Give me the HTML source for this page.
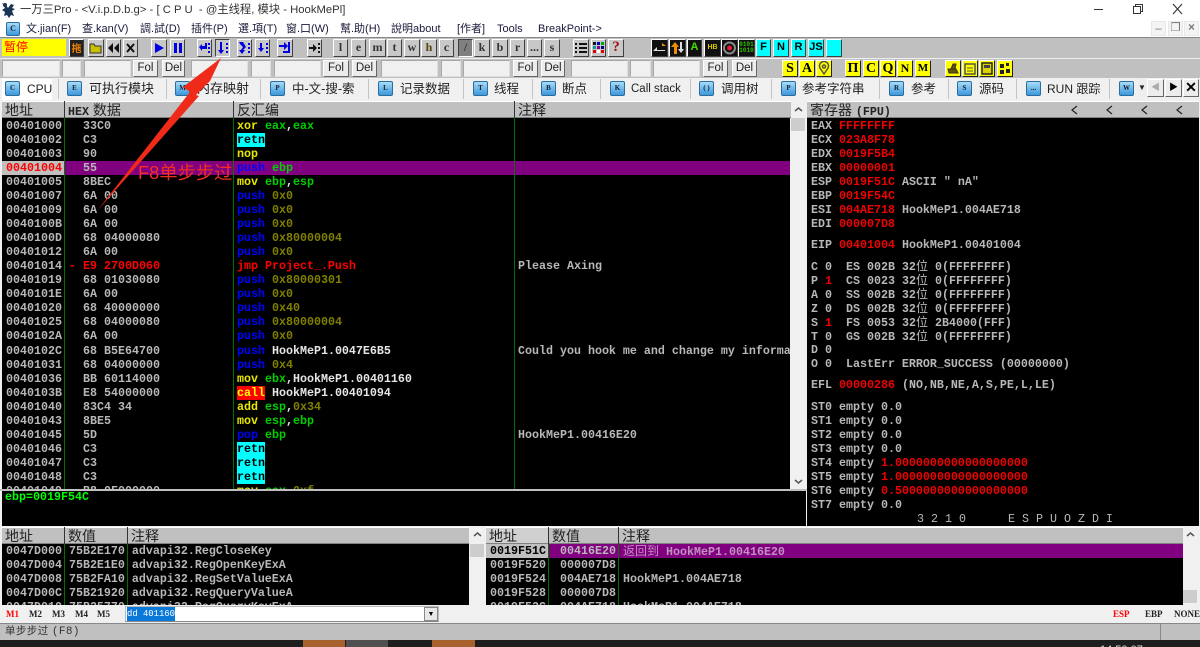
<!DOCTYPE html>
<html><head><meta charset="utf-8"><style>
html,body{margin:0;padding:0;width:1200px;height:647px;overflow:hidden;background:#fff}
body{position:relative;font-family:"Liberation Sans","Noto Sans CJK SC",sans-serif}
div,span,svg{box-sizing:border-box}
.p{position:absolute}
.t{position:absolute;white-space:pre;line-height:14px;height:14px;font:bold 11.67px/14px "Liberation Mono","Noto Sans CJK SC",monospace;color:#b8b8b8}
.m{position:absolute;top:22px;font-size:11px;line-height:15px;color:#1a1a3a;white-space:pre}
.b{position:absolute;top:39px;height:18px;background:#c8c8c8;border:1px solid;border-color:#fff #404040 #404040 #fff;text-align:center;font:bold 12px/15px "Liberation Serif",serif;color:#333;overflow:hidden}
.b svg{position:absolute;left:0;top:0}
.k{background:#111;color:#ee0}
.c{background:#0ff;color:#000;font:bold 11px/15px "Liberation Sans",sans-serif}
.y{position:absolute;top:60px;height:17px;background:#ff0;border:1px solid;border-color:#fff #222 #222 #fff;text-align:center;color:#000;font:bold 14px/15px "Liberation Serif",serif;overflow:hidden}
.i{position:absolute;top:60px;height:17px;background:#f0f0f0;border:1px solid;border-color:#a8a8a8 #ddd #ddd #a8a8a8}
.f{position:absolute;top:60px;height:17px;background:#ececec;border:1px solid;border-color:#fff #666 #666 #fff;text-align:center;font-size:11.5px;line-height:15px;color:#222}
.s{position:absolute;top:79px;width:1px;height:20px;background:#c4c4c4}
.o{position:absolute;top:81px;width:15px;height:15px;border:1px solid #2a6c9c;border-radius:2px;background:linear-gradient(#a8dcf8,#3c98dc);text-align:center;font:bold 7px/13px "Liberation Serif",serif;color:#123}
.l{position:absolute;top:81px;font-size:12px;line-height:16px;color:#222;white-space:pre}
.h{position:absolute;background:#c0c0c0;border-top:1px solid #fff;border-bottom:1px solid #808080;color:#222;font-size:14px;line-height:16px;padding-left:3px;white-space:pre}
.g{position:absolute;width:1px;background:#007000}
.a{left:6px}.x{left:83px}.d{left:237px}.n{left:518px}
i{font-style:normal}
.Y{color:#e8e800}.G{color:#00d000}.B{color:#0000ff}.O{color:#808000}.W{color:#e6e6e6}.R{color:#f00000}
.C{background:#0ff;color:#000;padding:0 0;display:inline-block;height:14px}
.F{background:#f00;color:#ff0;display:inline-block;height:14px}
.v{font:400 12px/14px "Noto Sans CJK SC",sans-serif}
</style></head><body>

<!-- title bar -->
<svg class="p" style="left:1px;top:2px" width="16" height="16" viewBox="0 0 16 16"><path d="M1 1l4 2 2 3 3-4 3 1-2 3 3 1-3 2 2 5-3-1-2 3-2-3-3 1 1-4-3-2 3-2z" fill="#1c3454"/><circle cx="4" cy="3" r="2" fill="#1c3454"/></svg>
<div class="p" style="left:20px;top:2px;font-size:11.3px;line-height:17px;color:#333;white-space:pre">一万三Pro - &lt;V.i.p.D.b.g&gt; - [ C P U  - @主线程, 模块 - HookMePl]</div>
<svg class="p" style="left:1090px;top:3px" width="105" height="14" viewBox="0 0 105 14" fill="none" stroke="#333"><path d="M4 6.5h9"/><path d="M43.5 3.5h7v7h-7zM45.5 3.5v-2h7v7h-2" fill="#fff"/><path d="M83 1l9 10M92 1l-9 10" stroke-width="1.1"/></svg>

<!-- menu -->
<div class="o" style="left:6px;top:22px;width:14px;height:14px;line-height:12px;font-size:8px">C</div>
<div class="m" style="left:26px">文.jian(F)</div>
<div class="m" style="left:82px">查.kan(V)</div>
<div class="m" style="left:140px">調.試(D)</div>
<div class="m" style="left:191px">插件(P)</div>
<div class="m" style="left:238px">選.項(T)</div>
<div class="m" style="left:286px">窗.口(W)</div>
<div class="m" style="left:340px">幫.助(H)</div>
<div class="m" style="left:391px">說明about</div>
<div class="m" style="left:457px">[作者]</div>
<div class="m" style="left:497px">Tools</div>
<div class="m" style="left:538px">BreakPoint-&gt;</div>
<div class="f" style="left:1151px;top:21px;width:15px;height:15px;background:#f4f4f4;border:1px solid #e8e8e8;color:#777;line-height:14px">–</div>
<div class="f" style="left:1168px;top:21px;width:15px;height:15px;background:#f4f4f4;border:1px solid #e8e8e8;color:#777;line-height:12px">❐</div>
<div class="f" style="left:1184px;top:21px;width:15px;height:15px;background:#f4f4f4;border:1px solid #e8e8e8;color:#777;line-height:13px;font-weight:bold">×</div>

<!-- toolbar 1 -->
<div class="p" style="left:0;top:37px;width:1200px;height:22px;background:#c0c0c0;border-top:1px solid #888;border-bottom:1px solid #f0f0f0"></div>
<div class="p" style="left:2px;top:39px;width:64px;height:17px;background:#ff0;color:#f00;font-size:12px;line-height:16px;padding-left:2px">暂停</div>
<div class="b k" style="left:69px;width:15px;background:#222;color:#f08000;font:bold 10px/15px 'Noto Sans CJK SC',sans-serif">拖</div>
<div class="b" style="left:88px;width:16px"><svg width="14" height="16"><path d="M1 4h4l1 2h6v7H1z" fill="#c8c000" stroke="#333"/></svg></div>
<div class="b" style="left:106px;width:15px"><svg width="13" height="16" fill="#111"><path d="M6 3v10L1 8zM12 3v10L7 8z"/></svg></div>
<div class="b" style="left:123px;width:15px"><svg width="13" height="16" stroke="#111" stroke-width="2"><path d="M3 4l7 8M10 4l-7 8"/></svg></div>
<div class="b" style="left:151px;width:16px"><svg width="14" height="16" fill="#0000e0"><path d="M3 3l9 5-9 5z"/></svg></div>
<div class="b" style="left:170px;width:15px"><svg width="13" height="16" fill="#0000e0"><path d="M3 3h3v10H3zM8 3h3v10H8z"/></svg></div>
<div class="b" style="left:197px;width:15px"><svg width="13" height="16" fill="#0000e0"><path d="M1 7l3-3v2h3V3h2v6H4v2zM10 3h2v2h-2zM10 7h2v2h-2zM10 11h2v2h-2z"/></svg></div>
<div class="b" style="left:215px;width:15px;border-color:#404040 #fff #fff #404040"><svg width="13" height="16" fill="#0000e0"><path d="M4 2h2v8h2l-3 4-3-4h2zM10 3h2v2h-2zM10 7h2v2h-2zM10 11h2v2h-2z"/></svg></div>
<div class="b" style="left:237px;width:15px"><svg width="13" height="16" fill="#0000e0"><path d="M1 2h4l3 5-3 3h2l-3 4-3-4h2l2-3-3-3zM10 3h2v2h-2zM10 7h2v2h-2zM10 11h2v2h-2z"/></svg></div>
<div class="b" style="left:255px;width:15px"><svg width="13" height="16" fill="#0000e0"><path d="M4 3h2v5h2l-3 4-3-4h2zM10 3h2v2h-2zM10 7h2v2h-2zM10 11h2v2h-2z"/></svg></div>
<div class="b" style="left:277px;width:16px"><svg width="14" height="16" fill="#0000e0"><path d="M1 5h5V2l4 4-4 4V7H1zM10 2h2v11H5v-2h5z"/></svg></div>
<div class="b" style="left:307px;width:15px"><svg width="13" height="16" fill="#111"><path d="M1 7h4V4l4 4-4 4V9H1zM10 3h2v2h-2zM10 7h2v2h-2zM10 11h2v2h-2z"/></svg></div>
<div class="b" style="left:333px;width:15px">l</div>
<div class="b" style="left:351px;width:15px">e</div>
<div class="b" style="left:369px;width:17px">m</div>
<div class="b" style="left:387px;width:15px">t</div>
<div class="b" style="left:404px;width:16px">w</div>
<div class="b" style="left:421px;width:16px;color:#554410">h</div>
<div class="b" style="left:439px;width:15px">c</div>
<div class="b" style="left:458px;width:15px;background:#808080;border-color:#404040 #fff #fff #404040">/</div>
<div class="b" style="left:474px;width:16px">k</div>
<div class="b" style="left:492px;width:16px">b</div>
<div class="b" style="left:510px;width:15px">r</div>
<div class="b" style="left:527px;width:15px">...</div>
<div class="b" style="left:544px;width:16px">s</div>
<div class="b" style="left:573px;width:16px"><svg width="14" height="16" fill="#111"><path d="M1 3h2v2H1zM5 3h8v2H5zM1 7h2v2H1zM5 7h8v2H5zM1 11h2v2H1zM5 11h8v2H5z"/></svg></div>
<div class="b" style="left:591px;width:15px"><svg width="13" height="16"><path d="M1 2h3v3H1z" fill="#111"/><path d="M5 2h3v3H5z" fill="#00c"/><path d="M9 2h3v3H9z" fill="#0a0"/><path d="M1 6h3v3H1z" fill="#00a0a0"/><path d="M5 6h3v3H5z" fill="#808"/><path d="M9 6h3v3H9z" fill="#000080"/><path d="M1 10h3v3H1z" fill="#d00"/><path d="M5 10h3v3H5z" fill="#fff"/><path d="M9 10h3v3H9z" fill="#d00"/></svg></div>
<div class="b" style="left:608px;width:16px;color:#a01010;font-size:15px">?</div>
<div class="b k" style="left:651px;width:17px"><svg width="15" height="16"><path d="M2 6h8V3l4 3H2z" fill="#f09000"/><path d="M13 10H5V7l-4 4h12z" fill="#ddd"/></svg></div>
<div class="b k" style="left:669px;width:17px"><svg width="15" height="16"><path d="M4 14V7H1l4-5 4 5H7v7z" fill="#f09000"/><path d="M10 2v7H8l3 4 3-4h-2V2z" fill="#ddd"/></svg></div>
<div class="b k" style="left:687px;width:15px;color:#40e000;font:bold 11px/15px 'Liberation Sans',sans-serif">A</div>
<div class="b k" style="left:704px;width:17px;color:#d8c800;font:bold 7px/15px 'Liberation Sans',sans-serif">HB</div>
<div class="b k" style="left:721px;width:17px"><svg width="15" height="16" fill="none"><circle cx="7.500" cy="8" r="5.500" stroke="#888" stroke-width="2"/><circle cx="7.500" cy="8" r="2.500" fill="#e02030"/></svg></div>
<div class="b k" style="left:738px;width:17px;color:#30c000;font:bold 6px/6px 'Liberation Mono',monospace;padding-top:2px">0101<br>1010</div>
<div class="b c" style="left:756px;width:15px">F</div>
<div class="b c" style="left:773px;width:16px">N</div>
<div class="b c" style="left:791px;width:15px">R</div>
<div class="b c" style="left:808px;width:16px">JS</div>
<div class="b c" style="left:826px;width:16px"></div>

<!-- toolbar 2 -->
<div class="p" style="left:0;top:59px;width:1200px;height:20px;background:#c0c0c0;border-bottom:1px solid #f0f0f0"></div>
<div class="i" style="left:2px;width:58px"></div><div class="i" style="left:62px;width:19px"></div><div class="i" style="left:84px;width:47px"></div>
<div class="f" style="left:133px;width:25px">Fol</div><div class="f" style="left:162px;width:23px">Del</div>
<div class="i" style="left:191px;width:57px"></div><div class="i" style="left:251px;width:20px"></div><div class="i" style="left:274px;width:47px"></div>
<div class="f" style="left:323px;width:26px">Fol</div><div class="f" style="left:352px;width:25px">Del</div>
<div class="i" style="left:381px;width:57px"></div><div class="i" style="left:441px;width:20px"></div><div class="i" style="left:463px;width:47px"></div>
<div class="f" style="left:513px;width:25px">Fol</div><div class="f" style="left:541px;width:24px">Del</div>
<div class="i" style="left:571px;width:57px"></div><div class="i" style="left:630px;width:21px"></div><div class="i" style="left:653px;width:47px"></div>
<div class="f" style="left:703px;width:25px">Fol</div><div class="f" style="left:732px;width:25px">Del</div>
<div class="y" style="left:782px;width:16px">S</div>
<div class="y" style="left:799px;width:16px">A</div>
<div class="y" style="left:816px;width:16px"><svg width="14" height="15" fill="none" stroke="#554" stroke-width="1.500"><path d="M7 13L3 7a4.500 4.500 0 1 1 8 0z"/><circle cx="7" cy="5.500" r="1.500"/></svg></div>
<div class="y" style="left:845px;width:16px">Π</div>
<div class="y" style="left:863px;width:16px">C</div>
<div class="y" style="left:880px;width:16px">Q</div>
<div class="y" style="left:897px;width:16px;font-size:12px">N</div>
<div class="y" style="left:915px;width:16px;font-size:11px">M</div>
<div class="y" style="left:945px;width:16px"><svg width="14" height="15"><path d="M2 8h8l2 4H3zM5 8l2-5h3l-1 5z" fill="#665500" stroke="#332"/></svg></div>
<div class="y" style="left:962px;width:16px"><svg width="14" height="15" fill="none" stroke="#554"><path d="M2 3h10v10H2z" stroke-width="1.500"/><path d="M4 7h6M4 10h6"/></svg></div>
<div class="y" style="left:979px;width:16px"><svg width="14" height="15"><path d="M2 2h10v11H2z" fill="#ddd000" stroke="#222" stroke-width="1.500"/><path d="M4 4h6v3H4z" fill="#444"/></svg></div>
<div class="y" style="left:997px;width:16px"><svg width="14" height="15" fill="#222"><path d="M2 3h4v4H2zM8 2h3v3H8zM2 9h4v4H2zM8 8h4v4H8z"/></svg></div>

<!-- tabs -->
<div class="p" style="left:0;top:79px;width:1200px;height:21px;background:#f0f0f0"></div>
<div class="p" style="left:2px;top:79px;width:50px;height:21px;background:#fff"></div>
<div class="o" style="left:5px">C</div><div class="l" style="left:27px">CPU</div><div class="s" style="left:58px"></div>
<div class="o" style="left:67px">E</div><div class="l" style="left:89px;font-size:13px">可执行模块</div><div class="s" style="left:166px"></div>
<div class="o" style="left:175px">M</div><div class="l" style="left:197px;font-size:13px">内存映射</div><div class="s" style="left:260px"></div>
<div class="o" style="left:270px">P</div><div class="l" style="left:292px;font-size:12.500px">中-文-搜-索</div><div class="s" style="left:368px"></div>
<div class="o" style="left:378px">L</div><div class="l" style="left:400px;font-size:12.500px">记录数据</div><div class="s" style="left:463px"></div>
<div class="o" style="left:473px">T</div><div class="l" style="left:494px;font-size:12.500px">线程</div><div class="s" style="left:532px"></div>
<div class="o" style="left:541px">B</div><div class="l" style="left:562px;font-size:12.500px">断点</div><div class="s" style="left:600px"></div>
<div class="o" style="left:610px">K</div><div class="l" style="left:631px;font-size:11.500px">Call stack</div><div class="s" style="left:690px"></div>
<div class="o" style="left:699px">( )</div><div class="l" style="left:721px;font-size:12.500px">调用树</div><div class="s" style="left:771px"></div>
<div class="o" style="left:781px">P</div><div class="l" style="left:802px;font-size:12.500px">参考字符串</div><div class="s" style="left:879px"></div>
<div class="o" style="left:889px">R</div><div class="l" style="left:911px;font-size:12.500px">参考</div><div class="s" style="left:948px"></div>
<div class="o" style="left:957px">S</div><div class="l" style="left:979px;font-size:12.500px">源码</div><div class="s" style="left:1016px"></div>
<div class="o" style="left:1026px">...</div><div class="l" style="left:1047px;font-size:12px">RUN 跟踪</div><div class="s" style="left:1109px"></div>
<div class="o" style="left:1119px">W</div>
<div class="f" style="left:1138px;top:79px;width:8px;height:18px;background:#eee;border:0;font-size:8px;line-height:18px">▼</div>
<div class="f" style="left:1147px;top:79px;width:17px;height:18px;color:#aaa;font-size:9px">◀</div>
<div class="f" style="left:1165px;top:79px;width:17px;height:18px;color:#000;font-size:9px">▶</div>
<div class="f" style="left:1183px;top:79px;width:16px;height:18px;color:#000;font-weight:bold;font-size:14px">✕</div>

<!-- disasm -->
<div class="p" style="left:0;top:100px;width:1200px;height:547px;background:#f0f0f0"></div>
<div class="p" style="left:2px;top:118px;width:788px;height:371px;background:#000"></div>
<div class="h" style="left:2px;top:101px;width:62px;height:17px">地址</div>
<div class="h" style="left:65px;top:101px;width:168px;height:17px"><span style="font:bold 11.67px 'Liberation Mono',monospace">HEX</span> 数据</div>
<div class="h" style="left:234px;top:101px;width:280px;height:17px">反汇编</div>
<div class="h" style="left:515px;top:101px;width:276px;height:17px">注释</div>
<div class="p" style="left:64px;top:101px;width:1px;height:17px;background:#333"></div>
<div class="p" style="left:233px;top:101px;width:1px;height:17px;background:#333"></div>
<div class="p" style="left:514px;top:101px;width:1px;height:17px;background:#333"></div>
<div class="p" style="left:2px;top:161px;width:62px;height:14px;background:#c0c0c0"></div>
<div class="p" style="left:64px;top:161px;width:726px;height:14px;background:#800080"></div>
<div class="g" style="left:64px;top:118px;height:371px"></div>
<div class="g" style="left:233px;top:118px;height:371px"></div>
<div class="g" style="left:514px;top:118px;height:371px"></div>

<div class="t a" style="top:119px">00401000</div><div class="t x" style="top:119px">33C0</div><div class="t d" style="top:119px"><i class="Y">xor</i> <i class="G">eax</i><i class="W">,</i><i class="G">eax</i></div>
<div class="t a" style="top:133px">00401002</div><div class="t x" style="top:133px">C3</div><div class="t d" style="top:133px"><i class="C">retn</i></div>
<div class="t a" style="top:147px">00401003</div><div class="t x" style="top:147px">90</div><div class="t d" style="top:147px"><i class="Y">nop</i></div>
<div class="t a" style="top:161px;color:#f00">00401004</div><div class="t x" style="top:161px">55</div><div class="t d" style="top:161px"><i class="B">push</i> <i class="G">ebp</i></div>
<div class="t a" style="top:175px">00401005</div><div class="t x" style="top:175px">8BEC</div><div class="t d" style="top:175px"><i class="Y">mov</i> <i class="G">ebp</i><i class="W">,</i><i class="G">esp</i></div>
<div class="t a" style="top:189px">00401007</div><div class="t x" style="top:189px">6A 00</div><div class="t d" style="top:189px"><i class="B">push</i> <i class="O">0x0</i></div>
<div class="t a" style="top:203px">00401009</div><div class="t x" style="top:203px">6A 00</div><div class="t d" style="top:203px"><i class="B">push</i> <i class="O">0x0</i></div>
<div class="t a" style="top:217px">0040100B</div><div class="t x" style="top:217px">6A 00</div><div class="t d" style="top:217px"><i class="B">push</i> <i class="O">0x0</i></div>
<div class="t a" style="top:231px">0040100D</div><div class="t x" style="top:231px">68 04000080</div><div class="t d" style="top:231px"><i class="B">push</i> <i class="O">0x80000004</i></div>
<div class="t a" style="top:245px">00401012</div><div class="t x" style="top:245px">6A 00</div><div class="t d" style="top:245px"><i class="B">push</i> <i class="O">0x0</i></div>
<div class="t a" style="top:259px">00401014</div><div class="t" style="left:69px;top:259px;color:#f00">-</div><div class="t x" style="top:259px;color:#f00">E9 2700D060</div><div class="t d" style="top:259px;color:#f00">jmp Project_.Push</div><div class="t n" style="top:259px">Please Axing</div>
<div class="t a" style="top:273px">00401019</div><div class="t x" style="top:273px">68 01030080</div><div class="t d" style="top:273px"><i class="B">push</i> <i class="O">0x80000301</i></div>
<div class="t a" style="top:287px">0040101E</div><div class="t x" style="top:287px">6A 00</div><div class="t d" style="top:287px"><i class="B">push</i> <i class="O">0x0</i></div>
<div class="t a" style="top:301px">00401020</div><div class="t x" style="top:301px">68 40000000</div><div class="t d" style="top:301px"><i class="B">push</i> <i class="O">0x40</i></div>
<div class="t a" style="top:315px">00401025</div><div class="t x" style="top:315px">68 04000080</div><div class="t d" style="top:315px"><i class="B">push</i> <i class="O">0x80000004</i></div>
<div class="t a" style="top:329px">0040102A</div><div class="t x" style="top:329px">6A 00</div><div class="t d" style="top:329px"><i class="B">push</i> <i class="O">0x0</i></div>
<div class="t a" style="top:344px">0040102C</div><div class="t x" style="top:344px">68 B5E64700</div><div class="t d" style="top:344px"><i class="B">push</i> <i class="W">HookMeP1.0047E6B5</i></div><div class="t n" style="top:344px;width:272px;overflow:hidden">Could you hook me and change my informa</div>
<div class="t a" style="top:358px">00401031</div><div class="t x" style="top:358px">68 04000000</div><div class="t d" style="top:358px"><i class="B">push</i> <i class="O">0x4</i></div>
<div class="t a" style="top:372px">00401036</div><div class="t x" style="top:372px">BB 60114000</div><div class="t d" style="top:372px"><i class="Y">mov</i> <i class="G">ebx</i><i class="W">,HookMeP1.00401160</i></div>
<div class="t a" style="top:386px">0040103B</div><div class="t x" style="top:386px">E8 54000000</div><div class="t d" style="top:386px"><i class="F">call</i> <i class="W">HookMeP1.00401094</i></div>
<div class="t a" style="top:400px">00401040</div><div class="t x" style="top:400px">83C4 34</div><div class="t d" style="top:400px"><i class="Y">add</i> <i class="G">esp</i><i class="W">,</i><i class="O">0x34</i></div>
<div class="t a" style="top:414px">00401043</div><div class="t x" style="top:414px">8BE5</div><div class="t d" style="top:414px"><i class="Y">mov</i> <i class="G">esp</i><i class="W">,</i><i class="G">ebp</i></div>
<div class="t a" style="top:428px">00401045</div><div class="t x" style="top:428px">5D</div><div class="t d" style="top:428px"><i class="B">pop</i> <i class="G">ebp</i></div><div class="t n" style="top:428px">HookMeP1.00416E20</div>
<div class="t a" style="top:442px">00401046</div><div class="t x" style="top:442px">C3</div><div class="t d" style="top:442px"><i class="C">retn</i></div>
<div class="t a" style="top:456px">00401047</div><div class="t x" style="top:456px">C3</div><div class="t d" style="top:456px"><i class="C">retn</i></div>
<div class="t a" style="top:470px">00401048</div><div class="t x" style="top:470px">C3</div><div class="t d" style="top:470px"><i class="C">retn</i></div>
<div class="t a" style="top:484px">00401049</div><div class="t x" style="top:484px">B8 0F000000</div><div class="t d" style="top:484px"><i class="Y">mov</i> <i class="G">eax</i><i class="W">,</i><i class="O">0xf</i></div>

<!-- scrollbar main -->
<div class="p" style="left:791px;top:101px;width:15px;height:390px;background:#f0f0f0"></div>
<div class="p" style="left:791px;top:118px;width:14px;height:13px;background:#cdcdcd"></div>
<svg class="p" style="left:793px;top:106px" width="11" height="7" fill="none" stroke="#555" stroke-width="1.500"><path d="M2 5l3.500-3L9 5"/></svg>
<svg class="p" style="left:793px;top:478px" width="11" height="7" fill="none" stroke="#555" stroke-width="1.500"><path d="M2 2l3.500 3L9 2"/></svg>

<!-- info pane -->
<div class="p" style="left:0;top:489px;width:807px;height:2px;background:#c0c0c0"></div>
<div class="p" style="left:2px;top:491px;width:804px;height:35px;background:#000"></div>
<div class="t" style="left:5px;top:490px;color:#00ff00">ebp=0019F54C</div>

<!-- registers -->
<div class="h" style="left:807px;top:101px;width:392px;height:17px;font-size:14px;padding-left:3px">寄存器 <span style="font:bold 11.67px 'Liberation Mono',monospace">(FPU)</span></div>
<svg class="p" style="left:1065px;top:102px" width="130" height="15" fill="none" stroke="#222" stroke-width="1.200"><path d="M12 4L7 8l5 4M47 4l-5 4 5 4M82 4l-5 4 5 4M117 4l-5 4 5 4"/></svg>
<div class="p" style="left:807px;top:118px;width:392px;height:408px;background:#000"></div>
<div class="t" style="left:811px;top:119px">EAX <i class="R">FFFFFFFF</i></div>
<div class="t" style="left:811px;top:133px">ECX <i class="R">023A8F78</i></div>
<div class="t" style="left:811px;top:147px">EDX <i class="R">0019F5B4</i></div>
<div class="t" style="left:811px;top:161px">EBX <i class="R">00000001</i></div>
<div class="t" style="left:811px;top:175px">ESP <i class="R">0019F51C</i> ASCII " nA"</div>
<div class="t" style="left:811px;top:189px">EBP <i class="R">0019F54C</i></div>
<div class="t" style="left:811px;top:203px">ESI <i class="R">004AE718</i> HookMeP1.004AE718</div>
<div class="t" style="left:811px;top:217px">EDI <i class="R">000007D8</i></div>
<div class="t" style="left:811px;top:238px">EIP <i class="R">00401004</i> HookMeP1.00401004</div>
<div class="t" style="left:811px;top:259px">C 0  ES 002B 32<i class="v">位</i> 0(FFFFFFFF)</div>
<div class="t" style="left:811px;top:273px">P <i class="R">1</i>  CS 0023 32<i class="v">位</i> 0(FFFFFFFF)</div>
<div class="t" style="left:811px;top:287px">A 0  SS 002B 32<i class="v">位</i> 0(FFFFFFFF)</div>
<div class="t" style="left:811px;top:301px">Z 0  DS 002B 32<i class="v">位</i> 0(FFFFFFFF)</div>
<div class="t" style="left:811px;top:315px">S <i class="R">1</i>  FS 0053 32<i class="v">位</i> 2B4000(FFF)</div>
<div class="t" style="left:811px;top:329px">T 0  GS 002B 32<i class="v">位</i> 0(FFFFFFFF)</div>
<div class="t" style="left:811px;top:343px">D 0</div>
<div class="t" style="left:811px;top:357px">O 0  LastErr ERROR_SUCCESS (00000000)</div>
<div class="t" style="left:811px;top:378px">EFL <i class="R">00000286</i> (NO,NB,NE,A,S,PE,L,LE)</div>
<div class="t" style="left:811px;top:400px">ST0 empty 0.0</div>
<div class="t" style="left:811px;top:414px">ST1 empty 0.0</div>
<div class="t" style="left:811px;top:428px">ST2 empty 0.0</div>
<div class="t" style="left:811px;top:442px">ST3 empty 0.0</div>
<div class="t" style="left:811px;top:456px">ST4 empty <i class="R">1.0000000000000000000</i></div>
<div class="t" style="left:811px;top:470px">ST5 empty <i class="R">1.0000000000000000000</i></div>
<div class="t" style="left:811px;top:484px">ST6 empty <i class="R">0.5000000000000000000</i></div>
<div class="t" style="left:811px;top:498px">ST7 empty 0.0</div>
<div class="t" style="left:917px;top:512px;font-weight:normal">3 2 1 0</div>
<div class="t" style="left:1008px;top:512px;font-weight:normal">E S P U O Z D I</div>

<!-- dump left -->
<div class="p" style="left:2px;top:527px;width:467px;height:78px;background:#000"></div>
<div class="h" style="left:2px;top:527px;width:62px;height:17px">地址</div>
<div class="h" style="left:65px;top:527px;width:62px;height:17px">数值</div>
<div class="h" style="left:128px;top:527px;width:341px;height:17px">注释</div>
<div class="p" style="left:64px;top:527px;width:1px;height:17px;background:#333"></div>
<div class="p" style="left:127px;top:527px;width:1px;height:17px;background:#333"></div>
<div class="g" style="left:64px;top:544px;height:61px"></div>
<div class="g" style="left:127px;top:544px;height:61px"></div>
<div class="t" style="left:6px;top:544px">0047D000 75B2E170 advapi32.RegCloseKey</div>
<div class="t" style="left:6px;top:558px">0047D004 75B2E1E0 advapi32.RegOpenKeyExA</div>
<div class="t" style="left:6px;top:572px">0047D008 75B2FA10 advapi32.RegSetValueExA</div>
<div class="t" style="left:6px;top:586px">0047D00C 75B21920 advapi32.RegQueryValueA</div>
<div class="t" style="left:6px;top:600px">0047D010 75B25770 advapi32.RegQueryKeyExA</div>
<div class="p" style="left:470px;top:527px;width:14px;height:78px;background:#f0f0f0"></div>
<div class="p" style="left:470px;top:544px;width:14px;height:13px;background:#cdcdcd"></div>
<svg class="p" style="left:472px;top:531px" width="11" height="7" fill="none" stroke="#555" stroke-width="1.500"><path d="M2 5l3.500-3L9 5"/></svg>

<!-- dump right -->
<div class="p" style="left:486px;top:527px;width:697px;height:78px;background:#000"></div>
<div class="h" style="left:486px;top:527px;width:62px;height:17px;background:#d0d0d0">地址</div>
<div class="h" style="left:549px;top:527px;width:69px;height:17px">数值</div>
<div class="h" style="left:619px;top:527px;width:564px;height:17px">注释</div>
<div class="p" style="left:548px;top:527px;width:1px;height:17px;background:#333"></div>
<div class="p" style="left:618px;top:527px;width:1px;height:17px;background:#333"></div>
<div class="p" style="left:486px;top:544px;width:62px;height:14px;background:#c0c0c0"></div>
<div class="p" style="left:548px;top:544px;width:635px;height:14px;background:#800080"></div>
<div class="g" style="left:548px;top:544px;height:61px"></div>
<div class="g" style="left:618px;top:544px;height:61px"></div>
<div class="t" style="left:490px;top:544px;color:#000">0019F51C</div>
<div class="t" style="left:560px;top:544px">00416E20</div>
<div class="t" style="left:623px;top:544px;color:#c090c0"><i class="v">返回到</i> HookMeP1.00416E20</div>
<div class="t" style="left:490px;top:558px">0019F520</div><div class="t" style="left:560px;top:558px">000007D8</div>
<div class="t" style="left:490px;top:572px">0019F524</div><div class="t" style="left:560px;top:572px">004AE718</div><div class="t" style="left:623px;top:572px">HookMeP1.004AE718</div>
<div class="t" style="left:490px;top:586px">0019F528</div><div class="t" style="left:560px;top:586px">000007D8</div>
<div class="t" style="left:490px;top:600px">0019F52C</div><div class="t" style="left:560px;top:600px">004AE718</div><div class="t" style="left:623px;top:600px">HookMeP1.004AE718</div>
<div class="p" style="left:1183px;top:527px;width:14px;height:78px;background:#f0f0f0"></div>
<div class="p" style="left:1183px;top:590px;width:14px;height:13px;background:#cdcdcd"></div>
<svg class="p" style="left:1185px;top:531px" width="11" height="7" fill="none" stroke="#555" stroke-width="1.500"><path d="M2 5l3.500-3L9 5"/></svg>

<!-- command bar -->
<div class="p" style="left:0;top:605px;width:1200px;height:18px;background:#f0f0f0"></div>
<div class="p" style="left:6px;top:607px;font:bold 9px/14px 'Liberation Serif',serif;color:#f00">M1</div>
<div class="p" style="left:29px;top:607px;font:bold 9px/14px 'Liberation Serif',serif;color:#222">M2</div>
<div class="p" style="left:52px;top:607px;font:bold 9px/14px 'Liberation Serif',serif;color:#222">M3</div>
<div class="p" style="left:75px;top:607px;font:bold 9px/14px 'Liberation Serif',serif;color:#222">M4</div>
<div class="p" style="left:97px;top:607px;font:bold 9px/14px 'Liberation Serif',serif;color:#222">M5</div>
<div class="p" style="left:125px;top:606px;width:314px;height:16px;background:#fff;border:1px solid #b8b8b8;border-bottom-color:#888"></div>
<div class="p" style="left:127px;top:607px;width:48px;height:14px;background:#0a78d8;color:#fff;font:8.9px/14px 'Liberation Mono',monospace;white-space:pre">dd 401160</div>
<div class="p" style="left:424px;top:607px;width:14px;height:14px;background:#e8e8e8;border:1px solid #888;text-align:center;font-size:7px;line-height:13px;color:#000">▼</div>
<div class="p" style="left:1113px;top:607px;font:bold 9px/14px 'Liberation Serif',serif;color:#f00">ESP</div>
<div class="p" style="left:1145px;top:607px;font:bold 9px/14px 'Liberation Serif',serif;color:#222">EBP</div>
<div class="p" style="left:1174px;top:607px;font:bold 9px/14px 'Liberation Serif',serif;color:#222">NONE</div>

<!-- status -->
<div class="p" style="left:0;top:623px;width:1200px;height:17px;background:#c0c0c0;border-top:1px solid #888"></div>
<div class="p" style="left:5px;top:624px;font-size:10.500px;line-height:15px;color:#333;white-space:pre;letter-spacing:.4px">单步步过 <span style="font:11px 'Liberation Mono',monospace">(F8)</span></div>
<div class="p" style="left:1160px;top:624px;width:1px;height:16px;background:#888"></div>
<div class="p" style="left:0;top:640px;width:1200px;height:7px;background:#1e1e1e"></div>
<div class="p" style="left:303px;top:640px;width:42px;height:7px;background:#a8602c"></div>
<div class="p" style="left:346px;top:640px;width:42px;height:7px;background:#505050"></div>
<div class="p" style="left:432px;top:640px;width:43px;height:7px;background:#a8602c"></div>
<div class="p" style="left:1100px;top:643px;font-size:11px;line-height:14px;color:#ddd">14:50:07</div>

<!-- annotation arrow -->
<svg class="p" style="left:0;top:0" width="1200" height="647"><path d="M97 211L190 92 183 87 221 58 210 81 196 95 199 96z" fill="#f02a18"/></svg>
<div class="p" style="left:138px;top:162px;font-size:18.3px;line-height:22px;color:#f03020;white-space:pre">F8单步步过</div>

</body></html>
